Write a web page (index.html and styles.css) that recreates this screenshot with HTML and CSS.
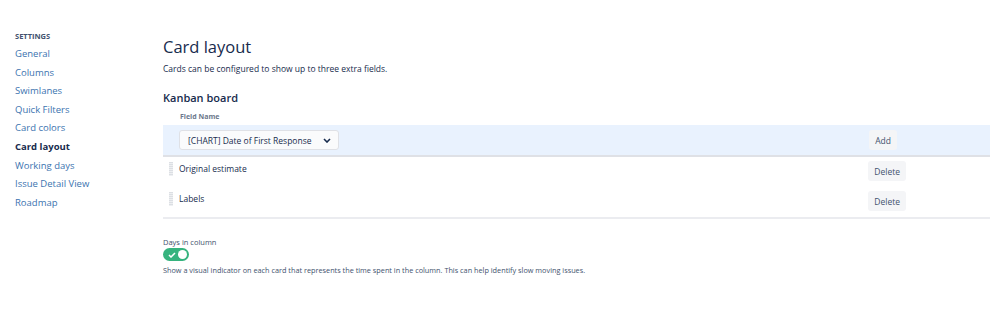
FILE: index.html
```html
<!DOCTYPE html>
<html>
<head>
<meta charset="utf-8">
<link rel="stylesheet" href="styles.css">
</head>
<body>
<div class="page">
  <nav class="sidebar">
    <div class="side-title">SETTINGS</div>
    <a class="side-link">General</a>
    <a class="side-link">Columns</a>
    <a class="side-link">Swimlanes</a>
    <a class="side-link">Quick Filters</a>
    <a class="side-link">Card colors</a>
    <a class="side-link active">Card layout</a>
    <a class="side-link">Working days</a>
    <a class="side-link">Issue Detail View</a>
    <a class="side-link">Roadmap</a>
  </nav>
  <main class="main">
    <h1 class="title">Card layout</h1>
    <p class="desc">Cards can be configured to show up to three extra fields.</p>
    <h2 class="subtitle">Kanban board</h2>
    <div class="table">
      <div class="thead">Field Name</div>
      <div class="row row-add">
        <div class="select">
          <span>[CHART] Date of First Response</span>
          <svg class="chev" width="8" height="5" viewBox="0 0 8 5"><path d="M1 1 L4 4 L7 1" fill="none" stroke="#172b4d" stroke-width="1.6"/></svg>
        </div>
        <button class="btn">Add</button>
      </div>
      <div class="row">
        <span class="grip"></span>
        <span class="field">Original estimate</span>
        <button class="btn">Delete</button>
      </div>
      <div class="row">
        <span class="grip"></span>
        <span class="field">Labels</span>
        <button class="btn">Delete</button>
      </div>
    </div>
    <div class="days">
      <div class="days-label">Days in column</div>
      <div class="toggle">
        <svg class="check" width="8" height="6" viewBox="0 0 8 6"><path d="M1 3 L3 5 L7 1" fill="none" stroke="#fff" stroke-width="1.5"/></svg>
        <span class="knob"></span>
      </div>
      <div class="days-desc">Show a visual indicator on each card that represents the time spent in the column. This can help identify slow moving issues.</div>
    </div>
  </main>
</div>
</body>
</html>
```
FILE: styles.css
```css
html, body {
  margin: 0;
  padding: 0;
  background: #fff;
}
body {
  font-family: "Open Sans", "Noto Sans", sans-serif;
  color: #172b4d;
}
.page {
  display: flex;
}
.sidebar {
  width: 148px;
  padding: 31px 0 0 15px;
  display: flex;
  flex-direction: column;
}
.side-title {
  font-size: 7.5px;
  font-weight: 700;
  color: #42526e;
  line-height: 10px;
  margin-bottom: 4px;
}
.side-link {
  font-size: 9.5px;
  line-height: 18.6px;
  color: #3b73af;
}
.side-link.active {
  color: #172b4d;
  font-weight: 700;
}
.main {
  flex: 1;
  padding: 36px 9px 0 0;
}
.title {
  margin: 0;
  font-size: 16.5px;
  font-weight: 500;
  line-height: 22px;
  color: #172b4d;
}
.desc {
  margin: 5px 0 0;
  font-size: 8.5px;
  line-height: 12px;
  color: #172b4d;
}
.subtitle {
  margin: 15px 0 0;
  font-size: 11px;
  font-weight: 600;
  line-height: 16px;
}
.table {
  margin-top: 5px;
  border-bottom: 2px solid #ebecf0;
}
.thead {
  padding-left: 17px;
  font-size: 7px;
  font-weight: 700;
  color: #6b778c;
  line-height: 12px;
  padding-bottom: 2px;
}
.row {
  display: flex;
  align-items: flex-start;
  height: 30px;
}
.row-add {
  background: #e9f2fe;
  border-bottom: 2px solid #dfe1e6;
  height: 30px;
  align-items: center;
}
.select {
  margin-left: 16px;
  width: 160px;
  height: 20px;
  box-sizing: border-box;
  background: #fafbfc;
  border: 1px solid #dfe1e6;
  border-radius: 3px;
  display: flex;
  align-items: center;
  justify-content: space-between;
  padding: 0 7px 0 8px;
  font-size: 8.5px;
}
.chev { display: block; }
.btn {
  margin-left: auto;
  margin-right: 84px;
  margin-top: 4px;
  font-family: inherit;
  font-size: 8.5px;
  color: #42526e;
  background: #f4f5f7;
  border: none;
  border-radius: 3px;
  height: 20px;
  padding: 0 6px;
}
.row-add .btn {
  margin-top: 0;
  margin-right: 93px;
}
.grip {
  width: 4px;
  height: 14px;
  margin-left: 6px;
  margin-top: 5px;
  background: repeating-linear-gradient(to bottom, #dcdfe4 0 1px, #eef0f2 1px 2px);
}
.field {
  margin-left: 6px;
  margin-top: 6px;
  font-size: 8.5px;
  line-height: 12px;
}
.days {
  margin-top: 18px;
}
.days-label {
  font-size: 7.5px;
  font-weight: 500;
  color: #42526e;
  line-height: 10px;
}
.toggle {
  position: relative;
  width: 26px;
  height: 13px;
  border-radius: 7px;
  background: #36b37e;
  margin-top: 1px;
}
.check {
  position: absolute;
  left: 5px;
  top: 3.5px;
}
.knob {
  position: absolute;
  right: 2px;
  top: 2px;
  width: 9px;
  height: 9px;
  border-radius: 50%;
  background: #fff;
}
.days-desc {
  margin-top: 4px;
  font-size: 7.3px;
  color: #42526e;
  line-height: 11px;
}
```
